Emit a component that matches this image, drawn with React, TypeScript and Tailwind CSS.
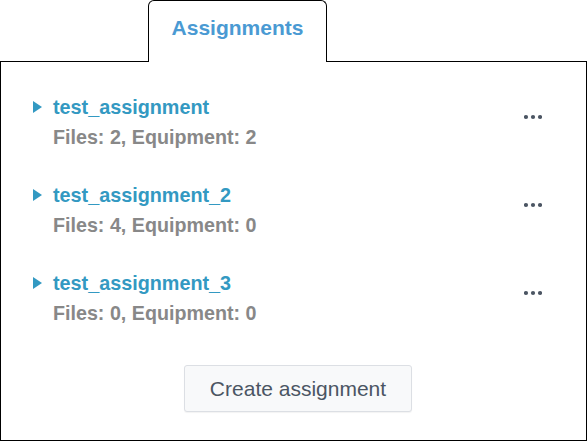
const assignments = [
  { name: "test_assignment", files: 2, equipment: 2 },
  { name: "test_assignment_2", files: 4, equipment: 0 },
  { name: "test_assignment_3", files: 0, equipment: 0 },
];

function Row({ name, files, equipment }: { name: string; files: number; equipment: number }) {
  return (
    <div className="flex items-start justify-between h-[88px]">
      <div className="flex items-start">
        <svg width="9" height="12" viewBox="0 0 9 12" className="mt-[5px] mr-[11px]">
          <path d="M0 0 L9 6 L0 12 Z" fill="#3399c2" />
        </svg>
        <div className="flex flex-col">
          <span className="text-[19.8px] leading-[22px] font-bold text-[#3399c2]">{name}</span>
          <span className="text-[19.7px] leading-[22px] font-bold text-[#888888] mt-[8px]">
            Files: {files}, Equipment: {equipment}
          </span>
        </div>
      </div>
      <button className="mt-[18px] mr-[44px]">
        <svg width="18" height="6" viewBox="0 0 18 6">
          <circle cx="2" cy="3" r="2.1" fill="#4b5563" />
          <circle cx="9" cy="3" r="2.1" fill="#4b5563" />
          <circle cx="16" cy="3" r="2.1" fill="#4b5563" />
        </svg>
      </button>
    </div>
  );
}

export default function App() {
  return (
    <div className="w-[588px] h-[442px] bg-white font-['Liberation_Sans',Arial,sans-serif]">
      <div className="flex">
        <div className="w-[148px] border-b border-black" />
        <div className="w-[179px] h-[62px] border border-b-0 border-black rounded-t-[6px] flex items-center justify-center pb-[7px] bg-white">
          <span className="text-[21px] font-bold text-[#4a9ad3]">Assignments</span>
        </div>
        <div className="w-[260px] border-b border-black" />
      </div>
      <div className="w-[587px] h-[379px] border border-t-0 border-black flex flex-col pt-[34px] pl-[32px]">
        {assignments.map((a) => (
          <Row key={a.name} {...a} />
        ))}
        <div className="flex justify-center pr-[23px] mt-[5px]">
          <button className="w-[228px] h-[47px] border border-[#dcdfe4] rounded-[3px] bg-[#f8f9fa] text-[21px] text-[#4b5563] shadow-[0_1px_1px_rgba(0,0,0,0.05)]">
            Create assignment
          </button>
        </div>
      </div>
    </div>
  );
}
